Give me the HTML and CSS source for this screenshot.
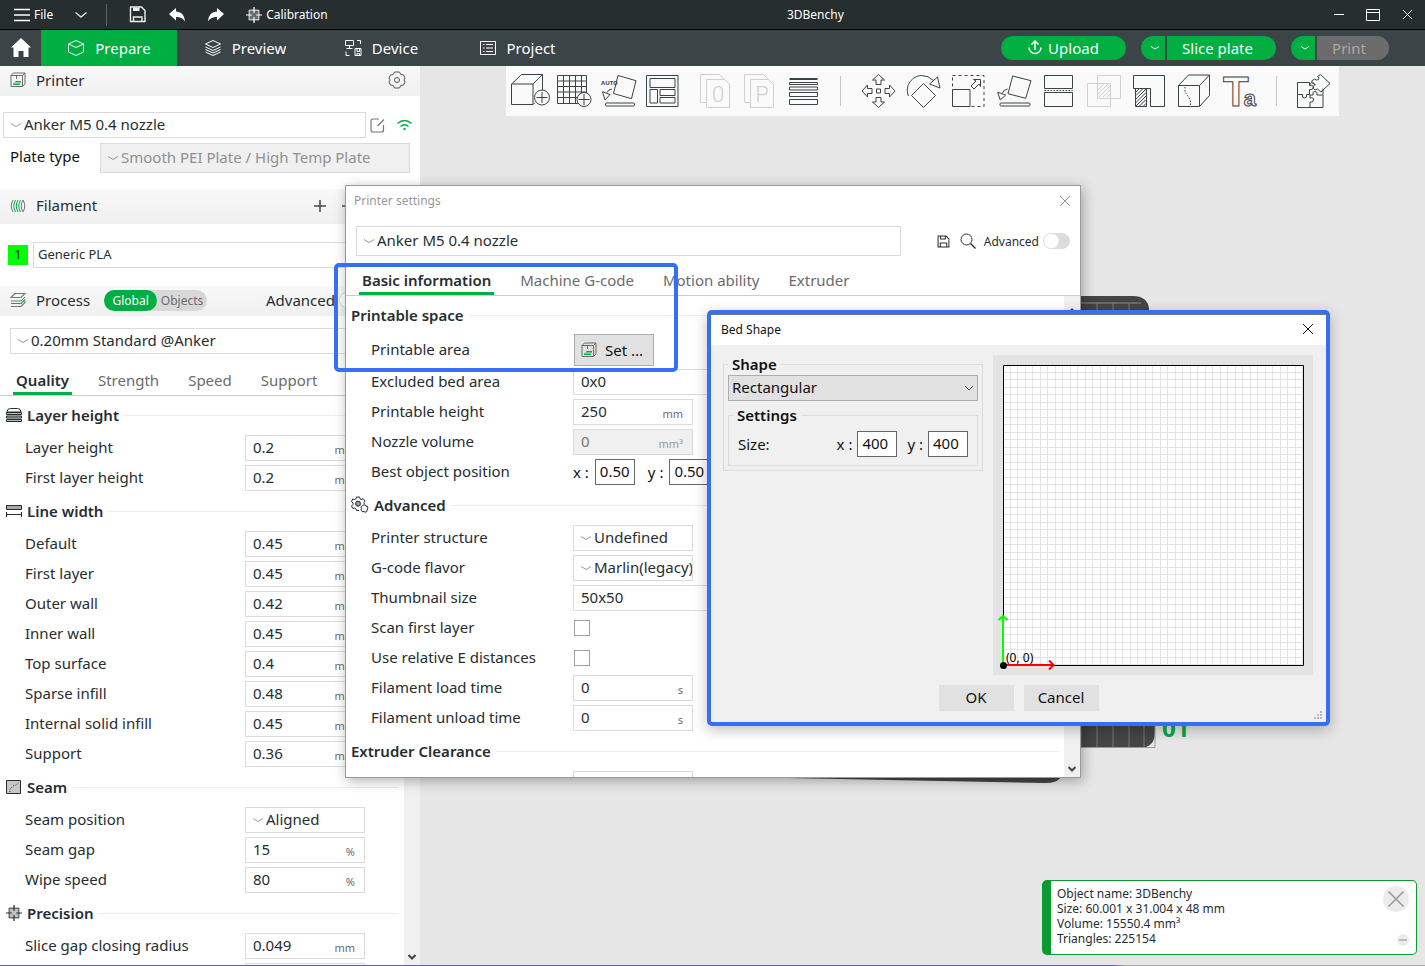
FILE: index.html
```
<!DOCTYPE html>
<html lang="en">
<head>
  <meta charset="UTF-8" />
  <meta name="viewport" content="width=device-width, initial-scale=1.0"/>
  <title>3DBenchy</title>
  <link rel="stylesheet" href="styles.css">
</head>
<body>
  <!-- shared icons -->
  <svg class="sprite" aria-hidden="true">
    <symbol id="i-printer" viewBox="0 0 16 16">
      <path d="M1 3.500 3.500 1H15v11l-2.500 2.500H1zM1 3.500h11.500v11M12.500 3.500 15 1M6.500 3.500v3.500" fill="none" stroke="#6b6b6b"/>
      <path d="M3 11.500h7.500l-1 1.500H3zM6 9h5v1.500H4z" fill="#00ae42"/>
    </symbol>
    <symbol id="i-target" viewBox="0 0 18 18">
      <path d="M3.500 3.500h11v11h-11z" fill="currentColor" fill-opacity=".3" stroke="currentColor"/>
      <path d="M9 0v6.500M9 11.500V18M0 9h6.500M11.500 9H18" fill="none" stroke="currentColor" stroke-width="1.400"/>
    </symbol>
    <symbol id="i-save" viewBox="0 0 18 18">
      <path d="M1.500 1.500h11l4 4v11h-15zM4.500 16v-5h9v5M5 2v3.500h6.500V2" fill="none" stroke="currentColor" stroke-width="1.400"/>
    </symbol>
    <symbol id="i-x" viewBox="0 0 12 12">
      <path d="M1 1l10 10M11 1 1 11" fill="none" stroke="currentColor"/>
    </symbol>
  </svg>

  <header class="titlebar">
    <button class="tb-btn"><svg width="16" height="14" viewBox="0 0 16 14"><path d="M0 1.500h16M0 7h16M0 12.500h16" stroke="#fff" stroke-width="1.300"/></svg>File</button>
    <button class="tb-icon arrow" aria-label="More"><svg width="12" height="6" viewBox="0 0 12 6"><path d="M.5.500 6 5l5.500-4.500" fill="none" stroke="#ddd" stroke-width="1.400"/></svg></button>
    <span class="tb-sep"></span>
    <button class="tb-icon" aria-label="Save"><svg width="17" height="17" viewBox="0 0 17 17"><path d="M1.500 1h11l3.500 3.500V15.500h-14.500zM4.500 15.500V11h8.500v4.500" fill="none" stroke="#eee" stroke-width="1.400"/><path d="M4 1.500h6.500V5H4z" fill="#eee"/></svg></button>
    <button class="tb-icon" aria-label="Undo"><svg width="16" height="14" viewBox="0 0 16 14"><path d="M0 6 7 0v3.500c5 0 8.500 3.500 9 10C13.500 10 11 9 7 9v3.500z" fill="#fff"/></svg></button>
    <button class="tb-icon" aria-label="Redo"><svg width="16" height="14" viewBox="0 0 16 14"><path d="M16 6 9 0v3.500C4 3.500.5 7 0 13.500 2.500 10 5 9 9 9v3.500z" fill="#fff"/></svg></button>
    <button class="tb-btn calib"><svg width="16" height="16"><use href="#i-target"/></svg>Calibration</button>
    <h1 class="app-title">3DBenchy</h1>
    <div class="win-controls">
      <button aria-label="Minimize"><svg width="10" height="12"><path d="M0 5.500h10" stroke="#fff"/></svg></button>
      <button aria-label="Maximize"><svg width="14" height="12"><path d="M.5.500h13v11H.5zM.5 3.500h13" fill="none" stroke="#fff"/></svg></button>
      <button aria-label="Close"><svg width="11" height="11"><use href="#i-x"/></svg></button>
    </div>
  </header>

  <nav class="tabbar">
    <button class="home" aria-label="Home"><svg width="20" height="20" viewBox="0 0 20 20"><path d="M10 0 0 9.500h2.500V19h5v-6h5v6h5V9.500H20z" fill="#fff"/></svg></button>
    <button class="tab active"><svg width="18" height="18" viewBox="0 0 18 18"><path d="M9 1.500l7.500 3.500v8L9 16.500 1.500 13V5zM1.500 5 9 8.500 16.500 5" fill="none" stroke="#fff"/></svg>Prepare</button>
    <button class="tab"><svg width="18" height="18" viewBox="0 0 18 18"><path d="M9 1.500l7.500 3.500L9 8.500 1.500 5zM1.500 8 9 11.500 16.500 8M1.500 10.500 9 14l7.500-3.500M1.500 13 9 16.500l7.500-3.500" fill="none" stroke="#fff"/></svg>Preview</button>
    <button class="tab"><svg width="18" height="18" viewBox="0 0 18 18"><path d="M1.500 1.500h8v5h-8zM5.500 6.500v3M2.500 9.500h6M13 1.500h3.500V5M2 12.500v4h3.500M11 9.500h6v7h-6zM13 9.500v3h2.500v-3M13 16v-1.500h2.500V16" fill="none" stroke="#fff"/></svg>Device</button>
    <button class="tab"><svg width="18" height="18" viewBox="0 0 18 18"><path d="M1.500 2.500h15v13h-15zM4 5.500h1.500M7 5.500h7M4 9h1.500M7 9h7M4 12.500h1.500M7 12.500h7" fill="none" stroke="#fff"/></svg>Project</button>
    <div class="actions">
      <button class="pill upload"><svg width="14" height="15" viewBox="0 0 14 15"><path d="M7 10V1.500M3.500 4.500 7 1l3.500 3.500M1 7.500a6 6 0 0 0 12 0" fill="none" stroke="#fff" stroke-width="1.500"/></svg>Upload</button>
      <div class="split">
        <button class="drop" aria-label="Slice options"><svg width="8" height="4"><path d="M0 .5 4 3l4-2.500" fill="none" stroke="#fff"/></svg></button>
        <button class="slice">Slice plate</button>
      </div>
      <div class="split">
        <button class="drop" aria-label="Print options"><svg width="8" height="4"><path d="M0 .5 4 3l4-2.500" fill="none" stroke="#fff"/></svg></button>
        <button class="print" disabled>Print</button>
      </div>
    </div>
  </nav>

  <main class="workspace">
    <aside class="sidebar">
      <div class="panel-head">
        <svg width="16" height="16"><use href="#i-printer"/></svg>
        <h2>Printer</h2>
        <button class="head-btn" aria-label="Printer options"><svg width="18" height="18" viewBox="0 0 18 18"><path d="M6.500 1h5l1.200 2.500 2.800.5 1.500 3-1 2 1 2-1.500 3-2.800.5L11.500 17h-5l-1.200-2.500L2.500 14 1 11l1-2-1-2 1.500-3 2.800-.5z" fill="none" stroke="#555"/><circle cx="9" cy="9" r="2.500" fill="none" stroke="#555"/></svg></button>
      </div>
      <div class="printer-box">
        <div class="preset">
          <select class="combo" aria-label="Printer preset"><option>Anker M5 0.4 nozzle</option></select>
          <button aria-label="Edit preset"><svg width="15" height="15" viewBox="0 0 15 15"><path d="M9 1H3Q1 1 1 3v9q0 2 2 2h8.500q2 0 2-2V7M7.500 8 14 1.500" fill="none" stroke="#777" stroke-width="1.200"/></svg></button>
          <button aria-label="Connection"><svg width="15" height="12" viewBox="0 0 15 12"><path d="M.5 4.500q7-6 14 0M3.500 7.500q4-3.500 8 0" fill="none" stroke="#00ae42" stroke-width="1.500"/><circle cx="7.500" cy="10" r="1.200" fill="#00ae42"/></svg></button>
        </div>
        <div class="plate">
          <label for="plateType">Plate type</label>
          <select id="plateType" class="combo" disabled><option>Smooth PEI Plate / High Temp Plate</option></select>
        </div>
      </div>

      <div class="panel-head filament">
        <svg width="16" height="16" viewBox="0 0 16 16"><path d="M3 2Q-.5 8 3 14M13 2q3.500 6 0 12M13 2q-3.500 6 0 12" fill="none" stroke="#777"/><path d="M5.500 2Q2 8 5.500 14M8 2Q4.500 8 8 14M10.500 2Q7 8 10.500 14" fill="none" stroke="#00ae42"/></svg>
        <h2>Filament</h2>
        <button class="head-btn add" aria-label="Add filament"><svg width="12" height="12"><path d="M6 0v12M0 6h12" stroke="#444" stroke-width="1.500"/></svg></button>
        <button class="head-btn" aria-label="Remove filament"><svg width="12" height="12"><path d="M0 6h12" stroke="#444" stroke-width="1.500"/></svg></button>
      </div>
      <div class="filament-box">
        <span class="swatch">1</span>
        <select class="combo plain" aria-label="Filament 1"><option>Generic PLA</option></select>
      </div>

      <div class="panel-head process">
        <svg width="16" height="16" viewBox="0 0 16 16"><path d="M1 5.500 5 1.500h10l-4 4zM1 14.500h10l4-4V9" fill="none" stroke="#777" stroke-width="1.200"/><path d="M1 9h10l4-4" fill="none" stroke="#777"/><path d="M1 11.500h10l4-4" fill="none" stroke="#00ae42" stroke-width="1.200"/></svg>
        <h2>Process</h2>
        <div class="scope"><button class="on">Global</button><button>Objects</button></div>
        <label class="adv">Advanced<input type="checkbox" class="switch"></label>
      </div>
      <div class="process-box">
        <select class="combo" aria-label="Process preset"><option>0.20mm Standard @Anker</option></select>
      </div>
      <div class="subtabs">
        <button class="active">Quality</button>
        <button>Strength</button>
        <button>Speed</button>
        <button>Support</button>
      </div>

      <div class="scroll">
        <div class="options">
          <h3><svg width="16" height="16" viewBox="0 0 16 16"><path d="M1 5Q1 1.500 4.500 1.500h7Q15 1.500 15 5z" fill="#fff" stroke="#222c2e"/><path d="M.5 5.500h15v2H.5zM.5 9h15v2H.5zM.5 12.500h15v2H.5z" fill="#bbb" stroke="#222c2e"/></svg>Layer height</h3>
          <label class="row"><span>Layer height</span><span class="field"><input value="0.2"><i>mm</i></span></label>
          <label class="row"><span>First layer height</span><span class="field"><input value="0.2"><i>mm</i></span></label>

          <h3><svg width="16" height="16" viewBox="0 0 16 16"><path d="M.5 2.500h15v4H.5z" fill="#aaa" stroke="#222c2e"/><path d="M.5 9v5M15.500 9v5M1 11.500h14" stroke="#222c2e"/></svg>Line width</h3>
          <label class="row"><span>Default</span><span class="field"><input value="0.45"><i>mm</i></span></label>
          <label class="row"><span>First layer</span><span class="field"><input value="0.45"><i>mm</i></span></label>
          <label class="row"><span>Outer wall</span><span class="field"><input value="0.42"><i>mm</i></span></label>
          <label class="row"><span>Inner wall</span><span class="field"><input value="0.45"><i>mm</i></span></label>
          <label class="row"><span>Top surface</span><span class="field"><input value="0.4"><i>mm</i></span></label>
          <label class="row"><span>Sparse infill</span><span class="field"><input value="0.48"><i>mm</i></span></label>
          <label class="row"><span>Internal solid infill</span><span class="field"><input value="0.45"><i>mm</i></span></label>
          <label class="row"><span>Support</span><span class="field"><input value="0.36"><i>mm</i></span></label>

          <h3><svg width="16" height="16" viewBox="0 0 16 16"><path d="M.5 1.500h14v13H.5z" fill="#c8c8c8" stroke="#222c2e"/><path d="M4 13v-3l3-3 3-1 3-2.500" fill="none" stroke="#222c2e" stroke-dasharray="1 1.500"/></svg>Seam</h3>
          <label class="row"><span>Seam position</span><select class="combo"><option>Aligned</option></select></label>
          <label class="row"><span>Seam gap</span><span class="field"><input value="15"><i>%</i></span></label>
          <label class="row"><span>Wipe speed</span><span class="field"><input value="80"><i>%</i></span></label>

          <h3><svg width="16" height="16"><use href="#i-target"/></svg>Precision</h3>
          <label class="row"><span>Slice gap closing radius</span><span class="field"><input value="0.049"><i>mm</i></span></label>
          <div class="row"><span></span><span class="field"><input aria-label="Resolution"></span></div>
        </div>
        <div class="scrollbar"><svg width="8" height="6" viewBox="0 0 8 6"><path d="M.5 1 4 4.500 7.500 1" fill="none" stroke="#444" stroke-width="2"/></svg></div>
      </div>
    </aside>

    <section class="viewport">
      <!-- build plate, mostly behind the windows -->
      <svg class="bed" width="420" height="500" viewBox="0 0 420 500">
        <path d="M0 482V0h355q14 0 16 12l6 424q0 16-16 16h-75v18q0 18-20 17L10 482z" fill="#434645"/>
        <path d="M300 7h63" stroke="#8a8d8c"/>
        <path d="M303 425v26M319 425v26M335 425v26M351 425v26M366 425v26M319 7v20M335 7v20M351 7v20" stroke="#777a79"/>
        <path d="M300 451.500h77v-26" fill="none" stroke="#9a9a9a"/>
        <text x="384" y="441">01</text>
      </svg>

      <div class="toolbar">
        <button aria-label="Add"><svg viewBox="0 0 44 50"><path d="M3.500 18H25v20.500H3.500zM3.500 18 13.500 8.500h21L25 18M34.500 8.500V24M25 38.500l2-2"/><circle cx="34" cy="31.500" r="7.500" class="bg"/><path d="M34 26v11M28.500 31.500h11"/></svg></button>
        <button aria-label="Add plate"><svg viewBox="0 0 44 50"><path d="M5.500 9.500h29v28h-29zM11.500 9.500v28M17.500 9.500v28M23.500 9.500v28M29.500 9.500v28M5.500 15h29M5.500 20.500h29M5.500 26h29M5.500 31.500h29"/><circle cx="32" cy="33.500" r="7" class="bg"/><path d="M32 28v11M26.500 33.500h11"/></svg></button>
        <button aria-label="Auto orient"><svg viewBox="0 0 44 50"><text x="5" y="19" class="auto">AUTO</text><path d="M22 9.500l18 5.200-4.500 18-18-5.200zM6.500 25.700l7.500 2.800-5 5.500zM11 26.500q1-3 5-3.500"/><rect x="9.500" y="37" width="29" height="3" rx="1"/></svg></button>
        <button aria-label="Arrange"><svg viewBox="0 0 44 50"><path d="M6.500 9.500h31.500v31H6.500zM10 12.500h25v9H10zM10 23.500h7.500V37H10zM20 23.500h15v6H20zM20 31.500h15V37H20z"/></svg></button>
        <span class="gap"></span>
        <button disabled aria-label="Split to objects"><svg viewBox="0 0 44 50"><path d="M13.500 36.500h-6v-28h19l5 5"/><path d="M13.500 13.500h18l5 5v23h-23z" class="bg"/><text x="25" y="36" class="letter">0</text></svg></button>
        <button disabled aria-label="Split to parts"><svg viewBox="0 0 44 50"><path d="M13.500 36.500h-6v-28h19l5 5"/><path d="M13.500 13.500h18l5 5v23h-23z" class="bg"/><text x="25" y="36" class="letter">P</text></svg></button>
        <button aria-label="Variable layer height"><svg viewBox="0 0 44 50"><path d="M8.500 13h28" stroke-width="2"/><path d="M8.500 16.500h28v2h-28zM8.500 21h28v3h-28zM8.500 26.500h28v4h-28zM8.500 33.500h28v5h-28z"/></svg></button>
        <span class="divider"></span>
        <button class="w" aria-label="Move"><svg viewBox="0 0 45 50"><path d="M22.500 8.500l6 5.500h-3.500v4.500h-5V14h-3.500zM22.500 41.500l6-5.500h-3.500v-4.500h-5V36h-3.500zM6 25l5.500-6v3.500H16v5h-4.500V31zM39 25l-5.500-6v3.500H29v5h4.500V31zM20.500 23h4v4h-4z"/></svg></button>
        <button class="w" aria-label="Rotate"><svg viewBox="0 0 45 50"><path d="M7.500 30C3 19 12 9.500 20.500 9.500q7 0 12 5M28.500 18l8-7 2.500 11zM22.500 17.500l12 12-12 12-12-12z"/></svg></button>
        <button class="w" aria-label="Scale"><svg viewBox="0 0 45 50"><path d="M6.500 9.500H38v31H6.500z" stroke-dasharray="3 3"/><path d="M6.500 23.500h17.500v17H6.500zM25 20l5-5-2.500-1.500h7v7L33 18l-5 5z" class="bg"/></svg></button>
        <button class="w" aria-label="Lay on face"><svg viewBox="0 0 45 50"><path d="M21.700 10 40 14.700l-5.300 17.600-17.700-4.600zM6.700 26.300l8 2.700-5.400 5zM11.500 27q1-3.500 5-4"/><rect x="9" y="37" width="30" height="3" rx="1"/></svg></button>
        <button class="w" aria-label="Cut"><svg viewBox="0 0 45 50"><path d="M8.500 9.500h28v13h-28zM8.500 26.500h28v14h-28z"/><path d="M8.500 24.500h28" stroke-dasharray="1.500 1.500"/></svg></button>
        <button class="w" disabled aria-label="Boolean"><svg viewBox="0 0 45 50"><path d="M6.500 17.500h23v23h-23zM16.500 9.500h23v23h-23zM17 24l6-6M17 28l10-10M18 31l11-11M22 31l7-7M26 31l3-3"/></svg></button>
        <button class="w" aria-label="Support painting"><svg viewBox="0 0 45 50"><path d="M7.500 9.500h31v31h-14v-18h-17zM9.500 22.500h11v18h-11zM10 26l3.500-3.500M10 29.500l7-7M10 33l10-10M10 36.500l10-10M10 40l10-10M13 40.500l7-7M17 40.500l3-3"/></svg></button>
        <button class="w" aria-label="Seam painting"><svg viewBox="0 0 45 50"><path d="M7.500 19.500h21v21h-21zM7.500 19.500 17.500 9h21l-10 10.500M38.500 9v20.500l-10 11"/><path d="M14 21v5l3 4 2.500 5v5" stroke-dasharray="1.500 1.500"/></svg></button>
        <button class="w" aria-label="Text"><svg viewBox="0 0 45 50"><text x="7" y="40" class="big">T<tspan class="small" dx="-5">a</tspan></text></svg></button>
        <span class="divider"></span>
        <button class="w" aria-label="Assembly"><svg viewBox="0 0 45 50"><path d="M5.500 16.500h12v3q4-1 3.500 2t-3.500 2v5h-3q1 3.500-2 3.500t-2-3.500h-5zM5.500 28.500v13H31V29H25q1-3.500-2-3.500T21 29h-3.500M18 29v3q4-1 3.500 2T18 36v5M17.500 19l2-2.500 4 2.500M31 28.500v-6"/><path d="M28.500 8.500 38 17.500l-9 8.500-3.500-3q-3 2-4-.5t1.500-4l-3.500-3.500 3-2q2.500 2 4 .5t-1-3z"/></svg></button>
      </div>

      <div class="notice">
        <p>Object name: 3DBenchy<br>Size: 60.001 x 31.004 x 48 mm<br>Volume: 15550.4 mm³<br>Triangles: 225154</p>
        <div class="notice-btns">
          <button class="close" aria-label="Close"><svg width="18" height="18"><use href="#i-x"/></svg></button>
          <button class="min" aria-label="Minimize"><svg width="8" height="2"><path d="M0 1h8" stroke="#bbb" stroke-width="2"/></svg></button>
        </div>
      </div>
    </section>

    <!-- Printer settings window -->
    <section class="window settings">
      <div class="win-title"><h2>Printer settings</h2><button aria-label="Close"><svg width="12" height="12"><use href="#i-x"/></svg></button></div>
      <div class="win-preset">
        <select class="combo" aria-label="Printer preset"><option>Anker M5 0.4 nozzle</option></select>
        <button class="first" aria-label="Save preset"><svg width="13" height="13"><use href="#i-save"/></svg></button>
        <button aria-label="Search"><svg width="16" height="16" viewBox="0 0 16 16"><circle cx="6.500" cy="6.500" r="5.500" fill="none" stroke="#333"/><path d="M10.500 10.500 15.500 15.500" stroke="#333" stroke-width="1.400"/></svg></button>
        <label>Advanced<input type="checkbox" class="switch"></label>
      </div>
      <div class="subtabs">
        <button class="active">Basic information</button>
        <button>Machine G-code</button>
        <button>Motion ability</button>
        <button>Extruder</button>
      </div>
      <div class="scroll">
        <div class="options">
          <h3>Printable space</h3>
          <div class="row tall"><span>Printable area</span><button class="set-btn"><svg width="16" height="16"><use href="#i-printer"/></svg>Set ...</button></div>
          <label class="row"><span>Excluded bed area</span><span class="field wide"><input value="0x0"></span></label>
          <label class="row"><span>Printable height</span><span class="field"><input value="250"><i>mm</i></span></label>
          <label class="row"><span>Nozzle volume</span><span class="field off"><input value="0" disabled><i>mm³</i></span></label>
          <div class="row"><span>Best object position</span><div class="pair"><label for="posX">x :</label><input id="posX" value="0.50"><label for="posY">y :</label><input id="posY" value="0.50"></div></div>

          <h3><svg width="18" height="18" viewBox="0 0 18 18"><path d="M5.500 1h3l.5 1.800 1.500.7 1.700-.8 1.800 2.300-1 1.500.3 1.500M5.500 1 5 2.800l-1.500.7-1.800-.5L.5 5.500 2 7v1.500L.5 10l1.300 2.500 1.700-.5L5 12.800l.5 1.700h2.500" fill="none" stroke="#222c2e"/><circle cx="7" cy="7.700" r="2.500" fill="#999" stroke="#222c2e"/><path d="M12 9h2.500l.5 1.200 1.700.5v2.300l-.7 1-.2 1.500-1.800.8-1-.8-1.800.2-1.200-1.700.5-1.500-.5-1.500 1.500-1.200z" fill="#fff" stroke="#222c2e"/></svg>Advanced</h3>
          <label class="row"><span>Printer structure</span><select class="combo"><option>Undefined</option></select></label>
          <label class="row"><span>G-code flavor</span><select class="combo"><option>Marlin(legacy)</option></select></label>
          <label class="row"><span>Thumbnail size</span><span class="field wide"><input value="50x50"></span></label>
          <label class="row"><span>Scan first layer</span><input type="checkbox" class="check"></label>
          <label class="row"><span>Use relative E distances</span><input type="checkbox" class="check"></label>
          <label class="row"><span>Filament load time</span><span class="field"><input value="0"><i>s</i></span></label>
          <label class="row"><span>Filament unload time</span><span class="field"><input value="0"><i>s</i></span></label>

          <h3>Extruder Clearance</h3>
          <div class="row"><span></span><span class="field"><input aria-label="Radius"></span></div>
        </div>
        <div class="scrollbar"><svg width="8" height="6" viewBox="0 0 8 6"><path d="M.5 5 4 1.500 7.500 5" fill="none" stroke="#444" stroke-width="2"/></svg><svg width="8" height="6" viewBox="0 0 8 6"><path d="M.5 1 4 4.500 7.500 1" fill="none" stroke="#444" stroke-width="2"/></svg></div>
      </div>
    </section>

    <div class="highlight"></div>

    <!-- Bed shape window -->
    <section class="window bed-shape">
      <div class="win-title"><h2>Bed Shape</h2><button aria-label="Close"><svg width="12" height="12"><use href="#i-x"/></svg></button></div>
      <div class="bed-body">
        <fieldset>
          <legend>Shape</legend>
          <select class="shape-select" aria-label="Shape"><option>Rectangular</option></select>
          <fieldset class="inner">
            <legend>Settings</legend>
            <div class="size">
              <span>Size:</span>
              <div class="pair"><label for="sizeX">x :</label><input id="sizeX" value="400"><label for="sizeY">y :</label><input id="sizeY" value="400" autofocus></div>
            </div>
          </fieldset>
        </fieldset>
        <svg class="preview" width="320" height="320" viewBox="0 0 320 320">
          <defs><pattern id="cells" width="15" height="15" patternUnits="userSpaceOnUse" x="10" y="10"><path d="M7.500 0v15M14.500 0v15M0 7.500h15M0 14.500h15" fill="none" stroke="#e3e3e3"/></pattern></defs>
          <path d="M10.500 10.500h300v300h-300z" fill="#fff"/>
          <path d="M10.500 10.500h300v300h-300z" fill="url(#cells)" stroke="#000"/>
          <path d="M10 310V261M5.500 265 10 261l4.500 4" fill="none" stroke="#0f0" stroke-width="2"/>
          <path d="M10 310h50M56 305.500 60.500 310l-4.500 4.500" fill="none" stroke="#f00" stroke-width="2"/>
          <circle cx="10.500" cy="310.500" r="3.500"/>
          <text x="13" y="307">(0, 0)</text>
        </svg>
      </div>
      <div class="bed-foot">
        <button>OK</button>
        <button>Cancel</button>
        <svg class="grip" width="8" height="8"><path d="M6 1h2M3 4h2M6 4h2M0 7h2M3 7h2M6 7h2" stroke="#bbb" stroke-width="2"/></svg>
      </div>
    </section>
  </main>
  <div class="taskline"></div>
</body>
</html>
```
FILE: styles.css
```
* {
  box-sizing: border-box;
}

body {
  margin: 0;
  height: 100vh;
  display: flex;
  flex-direction: column;
  overflow: hidden;
  font-family: 'Noto Sans', sans-serif;
  font-size: 14px;
  color: #262e30;
  background: #e6e6e6;
}

button, input, select {
  font: inherit;
  color: inherit;
}

button {
  border: 0;
  padding: 0;
  background: none;
  cursor: pointer;
}

svg {
  display: block;
  flex: none;
}

h1, h2, h3, p {
  margin: 0;
  font-weight: 400;
  font-size: inherit;
}

.sprite {
  position: absolute;
  width: 0;
  height: 0;
}

/* title bar */
.titlebar {
  flex: none;
  height: 30px;
  display: flex;
  align-items: center;
  padding-left: 14px;
  background: #262e30;
  border-bottom: 1px solid #000;
  color: #fff;
  font-size: 12px;
}

.tb-btn {
  display: flex;
  align-items: center;
  gap: 4px;
}

.tb-icon {
  width: 39px;
  display: flex;
  justify-content: center;
}

.tb-icon.arrow {
  width: 53px;
  padding-left: 3px;
}

.tb-sep {
  width: 1px;
  height: 22px;
  margin-right: 11px;
  background: #5c6365;
}

.calib {
  margin-left: 11px;
}

.app-title {
  flex: 1;
  text-align: center;
}

.win-controls {
  display: flex;
  align-items: center;
  gap: 22px;
  padding: 0 12px 0 31px;
}

/* main tabs */
.tabbar {
  flex: none;
  height: 36px;
  display: flex;
  align-items: stretch;
  background: #3b4446;
  color: #fff;
  font-size: 15px;
}

.home {
  width: 41px;
  display: flex;
  align-items: center;
  justify-content: center;
}

.tab {
  width: 136px;
  display: flex;
  align-items: center;
  justify-content: center;
  gap: 10px;
  padding-bottom: 1px;
}

.tab.active {
  background: #00ae42;
}

.actions {
  margin-left: auto;
  padding-right: 36px;
  display: flex;
  align-items: center;
  gap: 15px;
}

.pill, .split button {
  height: 24px;
  display: flex;
  align-items: center;
  justify-content: center;
  padding-bottom: 1px;
  background: #00ae42;
}

.pill {
  width: 125px;
  gap: 6px;
  border-radius: 12px;
}

.split {
  display: flex;
  gap: 2px;
}

.split .drop {
  width: 24px;
  padding-left: 4px;
  border-radius: 12px 0 0 12px;
}

.split .slice {
  width: 109px;
  padding-right: 8px;
  border-radius: 0 12px 12px 0;
}

.split .print {
  width: 72px;
  padding-right: 8px;
  border-radius: 0 12px 12px 0;
  background: #6b6b6b;
  color: #a8a8a8;
}

.workspace {
  position: relative;
  flex: 1;
  min-height: 0;
  display: flex;
}

/* sidebar */
.sidebar {
  width: 420px;
  flex: none;
  display: flex;
  flex-direction: column;
  background: #fff;
}

.panel-head {
  flex: none;
  height: 30px;
  display: flex;
  align-items: center;
  padding: 0 14px 2px 10px;
  background: linear-gradient(#f9f9f9, #f0f0f0);
  font-size: 15px;
}

.panel-head h2 {
  margin-left: 10px;
  padding-bottom: 1px;
}

.head-btn {
  margin-left: auto;
}

.panel-head.filament {
  height: 35px;
  padding-right: 66px;
}

.head-btn.add + .head-btn {
  margin-left: 16px;
}

.combo {
  appearance: none;
  width: 120px;
  height: 26px;
  margin: 0;
  padding: 0 0 2px 20px;
  border: 1px solid #dbdbdb;
  border-radius: 0;
  background: #fff url("data:image/svg+xml,%3Csvg xmlns='http://www.w3.org/2000/svg' width='10' height='4'%3E%3Cpath d='M0 .5 5 3.500 10 .5' fill='none' stroke='%23999'/%3E%3C/svg%3E") no-repeat 7px center;
  font-size: 15px;
}

.combo:disabled {
  background-color: #f0f0f0;
  color: #909090;
  opacity: 1;
}

.combo.plain {
  padding-left: 4px;
  background-image: none;
  font-size: 13px;
}

.printer-box {
  padding: 16px 8px 16px 3px;
}

.preset {
  display: flex;
  align-items: center;
  gap: 4px;
}

.preset .combo {
  flex: 1;
}

.preset button + button {
  margin-left: 8px;
}

.plate {
  display: flex;
  padding: 5px 2px 0 7px;
  font-size: 15px;
  line-height: 26px;
  color: #111;
}

.plate label {
  width: 90px;
}

.plate .combo {
  flex: 1;
  height: 30px;
}

.filament-box {
  display: flex;
  align-items: center;
  gap: 5px;
  padding: 18px 10px 18px 8px;
}

.filament-box .combo {
  flex: 1;
}

.swatch {
  width: 20px;
  height: 20px;
  background: #0f0;
  text-align: center;
  font-size: 13px;
  line-height: 19px;
}

.scope {
  display: flex;
  margin-left: 14px;
  border-radius: 11px;
  background: #d8d8d8;
  font-size: 12px;
  color: #6b6b6b;
}

.scope button {
  height: 21px;
  width: 50px;
}

.scope .on {
  width: 53px;
  border-radius: 11px;
  background: #00ae42;
  color: #fff;
}

.adv {
  margin-left: auto;
  padding-right: 40px;
  display: flex;
  align-items: center;
  gap: 4px;
}

.switch {
  appearance: none;
  width: 27px;
  height: 16px;
  margin: 0;
  border: 1px solid #dcdcdc;
  border-radius: 8px;
  background: radial-gradient(circle at 7px 7px, #fff 7px, #dcdcdc 8px);
}

.process-box {
  padding: 12px 10px 10px;
}

.process-box .combo {
  width: 100%;
  display: block;
}

.subtabs {
  flex: none;
  height: 32px;
  display: flex;
  gap: 23px;
  padding-left: 13px;
  border-bottom: 1px solid #ccc;
  font-size: 15px;
  color: #6b6b6b;
}

.subtabs button {
  padding: 0 3px;
}

.subtabs .active {
  border-bottom: 3px solid #00ae42;
  padding-top: 3px;
  color: #262e30;
  font-weight: 600;
}

.scroll {
  flex: 1;
  min-height: 0;
  display: flex;
  overflow: hidden;
}

.options {
  flex: 1;
  padding-top: 1px;
}

.options h3 {
  height: 36px;
  display: flex;
  align-items: center;
  gap: 5px;
  padding: 0 6px;
  font-size: 15px;
  font-weight: 600;
}

.options h3::after {
  content: '';
  flex: 1;
  height: 1px;
  background: #ececec;
}

.row {
  height: 30px;
  display: flex;
  align-items: center;
  padding-left: 25px;
  font-size: 15px;
}

.row.tall {
  height: 34px;
}

.row > span:first-child {
  width: 220px;
  flex: none;
  padding-bottom: 2px;
}

.field {
  width: 120px;
  height: 26px;
  display: flex;
  align-items: center;
  padding: 0 9px 0 7px;
  border: 1px solid #dbdbdb;
  background: #fff;
}

.field input {
  flex: 1;
  min-width: 0;
  padding: 0 0 2px;
  border: 0;
  outline: 0;
  background: none;
}

.field i {
  padding-top: 3px;
  font-size: 11px;
  font-style: normal;
  color: #6b6b6b;
}

.field.off {
  background: #f0f0f0;
  color: #777;
}

.field.off i {
  color: #999;
}

.field.wide {
  width: 240px;
}

.scrollbar {
  width: 16px;
  display: flex;
  flex-direction: column;
  align-items: center;
  justify-content: flex-end;
  padding-bottom: 5px;
  background: #f0f0f0;
}

/* 3d view */
.viewport {
  flex: 1;
  position: relative;
  display: flex;
  justify-content: center;
  align-items: flex-start;
}

.bed {
  position: absolute;
  left: 358px;
  top: 230px;
}

.bed text {
  font: 700 24px 'Open Sans', sans-serif;
  fill: #00ae42;
}

.toolbar {
  height: 50px;
  display: flex;
  padding: 0 2px;
  background: #fafafa;
}

.toolbar button {
  width: 44px;
}

.toolbar .w {
  width: 45px;
}

.toolbar svg {
  width: 100%;
  height: 50px;
  fill: none;
  stroke: #3a4345;
}

.toolbar button:disabled svg {
  stroke: #d0d0d0;
}

.toolbar .bg {
  fill: #fafafa;
}

.toolbar .auto {
  font: 700 6px 'Noto Sans', sans-serif;
  fill: #3a4345;
  stroke: none;
}

.toolbar .letter {
  font: 300 22px Roboto, sans-serif;
  fill: #d0d0d0;
  stroke: none;
  text-anchor: middle;
}

.toolbar .big {
  font: 700 42px 'Liberation Sans', sans-serif;
}

.toolbar .small {
  font-size: 22px;
}

.toolbar .gap {
  width: 9px;
}

.divider {
  width: 1px;
  height: 30px;
  margin: 10px 15px;
  background: #c4c4c4;
}

.notice {
  position: absolute;
  right: 8px;
  bottom: 10px;
  width: 375px;
  display: flex;
  justify-content: space-between;
  padding: 5px 7px 8px 6px;
  border: 1px solid #0a9a32;
  border-left-width: 9px;
  border-radius: 5px;
  background: #fff;
  font-size: 12px;
  line-height: 15px;
}

.notice-btns {
  display: flex;
  flex-direction: column;
  align-items: flex-end;
  justify-content: space-between;
}

.notice button {
  display: flex;
  align-items: center;
  justify-content: center;
  border-radius: 50%;
  background: #ececec;
  color: #999;
}

.notice .close {
  width: 26px;
  height: 26px;
}

.notice .min {
  width: 12px;
  height: 12px;
}

/* windows */
.window {
  position: absolute;
  display: flex;
  flex-direction: column;
  background: #fff;
}

.settings {
  left: 345px;
  top: 119px;
  width: 736px;
  height: 593px;
  border: 1px solid #999;
  box-shadow: 2px 3px 12px rgba(0, 0, 0, 0.3);
}

.win-title {
  display: flex;
  align-items: center;
  justify-content: space-between;
  height: 30px;
  padding: 0 9px 1px 8px;
  font-size: 12px;
}

.settings .win-title {
  color: #999;
}

.win-preset {
  display: flex;
  align-items: center;
  padding: 10px 10px 0;
}

.win-preset .combo {
  flex: 1;
  height: 30px;
}

.win-preset button {
  margin-right: 8px;
}

.win-preset .first {
  margin: 0 10px 0 36px;
}

.win-preset label {
  display: flex;
  align-items: center;
  gap: 4px;
  font-size: 12px;
}

.settings .subtabs {
  height: 30px;
  margin-top: 10px;
}

.settings .subtabs button {
  padding-bottom: 2px;
}

.settings .subtabs .active {
  padding-bottom: 0;
  padding-top: 1px;
}

.settings .row > span:first-child {
  width: 202px;
}

.settings .options h3 {
  padding: 0 5px;
}

.settings .scrollbar {
  justify-content: space-between;
  padding-top: 12px;
}

.set-btn {
  width: 80px;
  height: 32px;
  margin-left: 1px;
  padding-right: 4px;
  display: flex;
  align-items: center;
  justify-content: center;
  gap: 8px;
  border: 1px solid #adadad;
  background: #e1e1e1;
  color: #111;
}

.pair {
  display: flex;
  align-items: center;
  color: #111;
}

.pair input {
  width: 40px;
  height: 26px;
  margin: 0 13px 0 6px;
  padding: 0 0 3px 4px;
  border: 1px solid #666;
  outline: 0;
  background: #fff;
}

.check {
  appearance: none;
  width: 16px;
  height: 16px;
  margin: 0 1px;
  border: 1px solid #a0a0a0;
  background: #fff;
}

.highlight {
  position: absolute;
  left: 334px;
  top: 197px;
  width: 344px;
  height: 109px;
  border: 4px solid #346ff5;
  border-radius: 5px;
}

.bed-shape {
  left: 707px;
  top: 244px;
  width: 623px;
  border: 4px solid #346ff5;
  border-radius: 5px;
  background: #f0f0f0;
  box-shadow: 0 4px 14px rgba(0, 0, 0, 0.25);
  color: #111;
}

.bed-shape .win-title {
  height: 31px;
  padding: 0 12px 2px 10px;
  border-top: 1px solid #777;
  background: #fff;
}

.bed-body {
  display: flex;
  align-items: flex-start;
  justify-content: space-between;
  padding: 10px 13px 10px 12px;
  font-size: 15px;
}

fieldset {
  width: 260px;
  min-width: 0;
  margin: 0;
  padding: 0 4px 4px;
  border: 1px solid #dcdcdc;
}

legend {
  padding: 0 4px;
  font-weight: 600;
  line-height: 18px;
}

.shape-select {
  appearance: none;
  display: block;
  width: 100%;
  height: 26px;
  margin-top: 2px;
  padding: 0 3px 2px;
  border: 1px solid #adadad;
  border-radius: 0;
  background: #e1e1e1 url("data:image/svg+xml,%3Csvg xmlns='http://www.w3.org/2000/svg' width='10' height='6'%3E%3Cpath d='M1 1 5 5 9 1' fill='none' stroke='%23444'/%3E%3C/svg%3E") no-repeat right 3px center;
}

.inner {
  width: 100%;
  margin-top: 5px;
  padding: 7px 9px 8px;
}

.inner legend {
  margin-left: -5px;
}

.size {
  display: flex;
  align-items: center;
  justify-content: space-between;
}

.size .pair input {
  margin: 0 10px 0 5px;
}

.size .pair input:last-child {
  margin-right: 0;
}

.preview {
  background: #e3e3e3;
}

.preview text {
  font: 12px 'Noto Sans', sans-serif;
}

.bed-foot {
  position: relative;
  display: flex;
  justify-content: center;
  gap: 10px;
  padding-bottom: 11px;
  font-size: 15px;
}

.bed-foot button {
  width: 75px;
  height: 26px;
  padding-bottom: 2px;
  background: #e1e1e1;
}

.grip {
  position: absolute;
  right: 4px;
  bottom: 3px;
}

.taskline {
  flex: none;
  height: 1px;
  background: linear-gradient(90deg, #2a7a9c 78%, #aaa 79%);
}
```
